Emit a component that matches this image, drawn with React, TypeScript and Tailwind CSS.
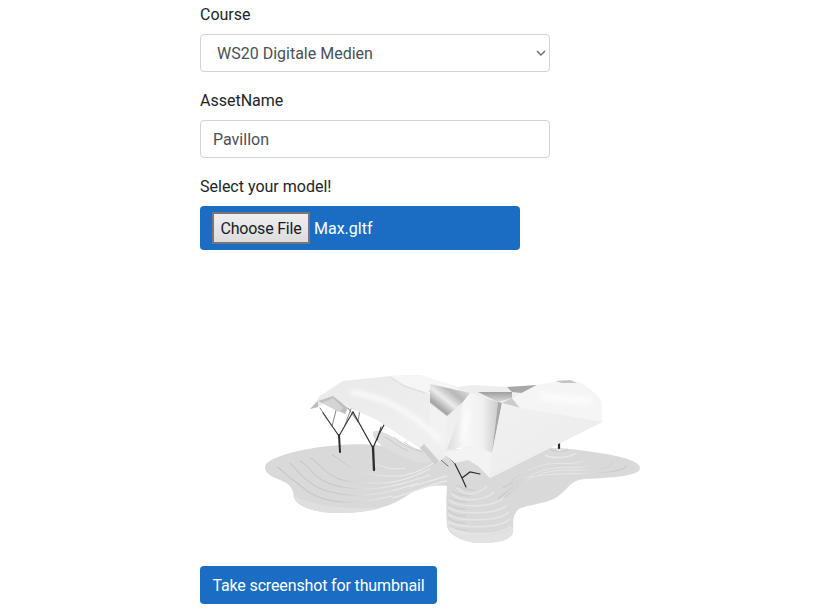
const font = "font-['Roboto','Liberation_Sans',sans-serif]";

const leftLines = [
  "M277 467C285 472 288 478 296 482C305 490 315 498 333 501C350 504 370 501 392 496",
  "M290 463C297 470 303 478 312 484C320 490 335 494 350 495C370 497 395 491 418 483",
  "M300 461C308 465 312 474 322 480C332 486 345 488 360 489C380 490 400 485 430 475",
  "M310 458C318 462 322 470 333 476C342 482 360 483 375 483C395 484 410 478 430 469",
  "M332 455C340 458 345 466 357 470C365 474 385 477 400 476C415 474 425 468 435 462",
  "M355 452C362 455 365 460 376 464C385 468 395 470 405 468",
];
const rightLines = [
  "M627 466C620 474 590 473 560 474C535 475 520 477 503 488",
  "M613 463C605 472 585 470 565 470C540 470 522 482 505 497",
  "M600 462C592 470 575 466 556 468C535 470 520 480 498 499",
  "M587 458C580 466 565 462 548 464C530 467 512 478 510 484",
];
const rings = [
  { y: 488, a: 457, b: 487 },
  { y: 494, a: 452, b: 494 },
  { y: 500, a: 449, b: 503 },
  { y: 507, a: 448, b: 507 },
  { y: 514, a: 448, b: 509 },
  { y: 521, a: 448, b: 510 },
  { y: 528, a: 449, b: 511 },
];

function Model() {
  return (
    <svg viewBox="240 260 420 300" className="block w-[420px] h-[300px] mt-[10px] ml-[240px]" aria-hidden="true">
      <defs>
        <linearGradient id="gl" gradientUnits="userSpaceOnUse" x1="280" y1="0" x2="400" y2="0">
          <stop offset="0" stopColor="#bdbdbd" />
          <stop offset="0.5" stopColor="#c6c6c6" />
          <stop offset="0.75" stopColor="#e2e2e2" />
          <stop offset="1" stopColor="#ededed" />
        </linearGradient>
        <linearGradient id="gr" gradientUnits="userSpaceOnUse" x1="625" y1="0" x2="500" y2="0">
          <stop offset="0" stopColor="#c0c0c0" />
          <stop offset="0.4" stopColor="#e8e8e8" />
          <stop offset="0.75" stopColor="#e4e4e4" />
          <stop offset="1" stopColor="#bcbcbc" />
        </linearGradient>
        <linearGradient id="shell" x1="0" y1="0" x2="1" y2="1">
          <stop offset="0" stopColor="#e9e9e9" />
          <stop offset="0.55" stopColor="#f0f0f0" />
          <stop offset="1" stopColor="#e2e2e2" />
        </linearGradient>
        <linearGradient id="bands" x1="1" y1="0" x2="0" y2="1">
          <stop offset="0" stopColor="#eeeeee" />
          <stop offset="0.35" stopColor="#b8b8b8" />
          <stop offset="0.55" stopColor="#ececec" />
          <stop offset="0.75" stopColor="#a6a6a6" />
          <stop offset="1" stopColor="#f0f0f0" />
        </linearGradient>
        <linearGradient id="centre" x1="0" y1="0" x2="1" y2="0">
          <stop offset="0" stopColor="#dcdcdc" />
          <stop offset="0.35" stopColor="#f8f8f8" />
          <stop offset="0.7" stopColor="#f0f0f0" />
          <stop offset="1" stopColor="#cccccc" />
        </linearGradient>
        <linearGradient id="dark" x1="0" y1="0" x2="0" y2="1">
          <stop offset="0" stopColor="#a0a0a0" />
          <stop offset="1" stopColor="#dadada" />
        </linearGradient>
        <linearGradient id="face" x1="0" y1="0" x2="1" y2="1">
          <stop offset="0" stopColor="#f1f1f1" />
          <stop offset="1" stopColor="#ebebeb" />
        </linearGradient>
        <filter id="soft" x="-5%" y="-5%" width="110%" height="110%"><feGaussianBlur stdDeviation="0.4" /></filter>
        <filter id="blur" x="-20%" y="-20%" width="140%" height="140%"><feGaussianBlur stdDeviation="2" /></filter>
      </defs>

      {/* ground */}
      <path
        d="M265 467C265 458 300 448 340 445C365 443 385 445 400 450L560 448C600 452 640 458 640 468C640 476 610 478 585 479C570 480 570 488 557 497C545 505 520 505 517 511C511 518 514 525 513 533C510 541 495 543 480 543C465 543 447 535 447 525C446 515 446 500 447 486C430 484 415 490 405 497C395 503 390 505 383 507C370 512 350 513 335 513C310 512 295 505 294 497C293 488 290 484 280 480C270 476 265 473 265 467Z"
        fill="#d9d9d9"
        filter="url(#soft)"
      />
      <path d="M447 520C447 535 465 543 480 543C495 543 510 541 513 533L513 526C505 538 460 538 447 520Z" fill="#e2e2e2" />
      <path d="M293 495C296 505 310 512 335 513C350 513 370 512 383 507C370 509 320 510 293 495Z" fill="#dfdfdf" />
      <g fill="none" filter="url(#soft)">
        {leftLines.map((d) => (
          <path key={d} d={d} stroke="url(#gl)" strokeWidth="1" />
        ))}
        {rightLines.map((d) => (
          <path key={d} d={d} stroke="url(#gr)" strokeWidth="1" />
        ))}
        {rings.map(({ y, a, b }) => (
          <g key={y}>
            <path d={`M${a} ${y}C${a + 9} ${y + 8} ${b - 10} ${y + 8} ${b} ${y - 2}`} stroke="#e6e6e6" strokeWidth="1.6" />
            <path d={`M${a} ${y - 3}C${a + 6} ${y + 1} ${a + 12} ${y + 2} ${a + 18} ${y + 2}`} stroke="#c2c2c2" strokeWidth="0.7" />
          </g>
        ))}
        <path d="M392 498C415 492 430 484 447 481" stroke="#e8e8e8" strokeWidth="1.5" />
        <path d="M410 487C425 483 435 479 447 476" stroke="#e8e8e8" strokeWidth="1.3" />
        <path d="M545 455C552 459 570 458 576 453" stroke="#e8e8e8" strokeWidth="1.5" />
        <path d="M550 449C554 452 565 452 568 449" stroke="#c4c4c4" strokeWidth="0.8" />
      </g>

      {/* mound behind the roof edge */}
      <path d="M373 433C374 428 385 432 398 440C412 449 430 455 430 462C420 466 405 458 393 452C383 447 372 440 373 433Z" fill="#dedede" />
      <g fill="none" stroke="#c4c4c4" strokeWidth="0.8">
        <path d="M385 437C392 441 399 447 408 451" />
        <path d="M394 437C400 443 410 448 418 451" />
        <path d="M404 442C410 447 418 450 426 453" />
      </g>

      {/* trees */}
      <g fill="none" stroke="#2b2b2b" strokeLinecap="round">
        <path d="M340 452L339 435" strokeWidth="2" />
        <path d="M339 436L323 413M339 436L347 422L353 412" strokeWidth="1.1" />
        <path d="M374 470L373 447" strokeWidth="2.3" />
        <path d="M373 448L353 412M373 448L379 434L384 425" strokeWidth="1.2" />
        <path d="M377 440L381 427" strokeWidth="0.9" />
        <path d="M332 426L320 408M332 426L337 407M345 425L352 406" stroke="#555" strokeWidth="0.7" />
        <path d="M358 422L348 408M358 422L360 409" stroke="#555" strokeWidth="0.7" />
        <path d="M466 487L462 478L455 464M462 478L470 472L480 474" strokeWidth="1.2" />
        <path d="M448 466L441 460M455 464L447 455" stroke="#444" strokeWidth="0.7" />
        <path d="M559 448V443" strokeWidth="2.2" />
      </g>
      <path d="M556 449C558 451 561 451 563 449" stroke="#f0f0f0" strokeWidth="1" fill="none" />

      {/* roof */}
      <g filter="url(#soft)">
        <path d="M310 409L320 396L343 381L390 376L420 375L457 387L473 385L507 387L537 385L570 380C582 382 595 390 602 403L602 422L490 478L478 462L460 445L435 465L418 447L377 420L350 408L333 398L318 407Z" fill="url(#shell)" />
        <path d="M310 409L318 401L318 407Z" fill="#bcbcbc" />
        <path d="M318 401L333 396L348 408L345 414Z" fill="#bfbfbf" />
        <path d="M322 403L333 398L343 408L339 412Z" fill="#d4d4d4" />
        <path d="M420 448L435 465L439 461L424 444Z" fill="#cfcfcf" />
        <path d="M390 376L420 375L445 383L460 390L442 397L425 392L405 385Z" fill="#f6f6f6" />
        <path d="M428 391L442 388L436 394Z" fill="#c6c6c6" />
        <path d="M390 377L404 386L425 393" fill="none" stroke="#d8d8d8" strokeWidth="0.8" />
        <path d="M430 384L470 393L463 402L447 416L430 403Z" fill="url(#bands)" />
        <path d="M430 403L447 417L445 450L430 438Z" fill="#f2f2f2" />
        <path d="M470 393L498 402L492 453L475 445L447 450L463 402Z" fill="url(#centre)" />
        <path d="M498 402L502 403L492 453Z" fill="#a8a8a8" />
        <path d="M478 392L512 392L512 398L498 402Z" fill="url(#dark)" />
        <path d="M512 398L520 408L502 403Z" fill="#cccccc" />
        <path d="M507 387L537 385L522 393L512 392Z" fill="#a8a8a8" />
        <path d="M443 453L475 445L492 453L490 478L478 466L468 460L455 463Z" fill="#f3f3f3" />
        <path d="M512 398L537 385L570 380C582 382 595 390 602 403L602 422L520 408Z" fill="#f5f5f5" />
        <path d="M555 381L570 380L577 383L562 383Z" fill="#c4c4c4" />
        <path d="M502 403L520 408L602 422L490 478L492 453Z" fill="url(#face)" />
      </g>
      <g filter="url(#blur)" fill="none">
        <path d="M350 392C385 396 415 415 440 440" stroke="#f9f9f9" strokeWidth="5" />
        <path d="M468 412L462 440" stroke="#ffffff" strokeWidth="3" />
        <path d="M540 396L592 402" stroke="#fbfbfb" strokeWidth="8" />
      </g>
    </svg>
  );
}

export default function App() {
  return (
    <div className={`${font} w-[829px] h-[615px] overflow-hidden bg-white text-[16px] leading-6 text-[#212529]`}>
      <div className="w-[350px] ml-[200px] pt-[3px] flex flex-col">
        <label className="block h-6 mb-[7px]">Course</label>
        <div className="relative h-[38px] rounded border border-[#ced4da] pl-4 pt-[2px] flex items-center text-[#495057]">
          WS20 Digitale Medien
          <svg viewBox="0 0 10 6" className="absolute right-[3px] top-[15px] w-[10px] h-[6px]" aria-hidden="true">
            <path d="M1 1l4 4 4-4" fill="none" stroke="#6b6b6b" strokeWidth="1.4" />
          </svg>
        </div>
        <label className="block h-6 mt-[17px] mb-[7px]">AssetName</label>
        <div className="h-[38px] rounded border border-[#ced4da] px-3 pt-[2px] flex items-center text-[#495057]">Pavillon</div>
        <label className="block h-6 mt-[17px] mb-[7px]">Select your model!</label>
        <div className="w-[320px] h-[44px] rounded bg-[#1a6dc3] text-white flex items-center pl-3">
          <span className="h-[32px] w-[98px] bg-[linear-gradient(#efefef,#dcdcdc)] border-2 border-[#767676] text-[#1a1a1a] pt-px flex items-center justify-center tracking-[-0.2px]">
            Choose File
          </span>
          <span className="ml-1 pt-px">Max.gltf</span>
        </div>
      </div>
      <Model />
      <div className="ml-[200px] mt-[6px] w-[237px] h-[38px] rounded bg-[#1a6dc3] text-white pt-px flex items-center justify-center whitespace-nowrap tracking-[-0.14px]">
        Take screenshot for thumbnail
      </div>
    </div>
  );
}
